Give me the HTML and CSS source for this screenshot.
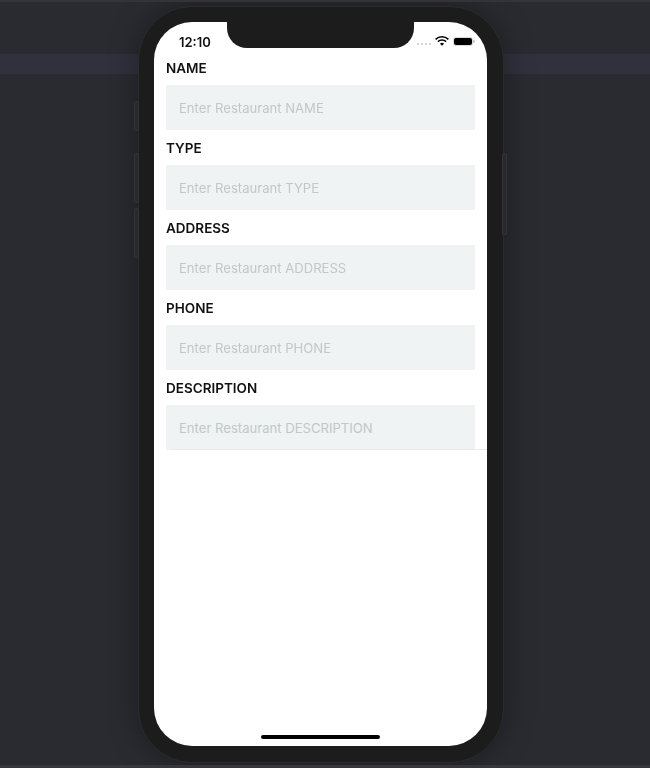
FILE: index.html
```html
<!DOCTYPE html>
<html lang="en">
<head>
  <meta charset="UTF-8" />
  <meta name="viewport" content="width=device-width, initial-scale=1.0"/>
  <title>Add Restaurant</title>
  <link rel="stylesheet" href="styles.css">
</head>
<body>
  <div class="toolbar-band"></div>
  <div class="phone">
    <span class="side-btn mute"></span>
    <span class="side-btn vol-up"></span>
    <span class="side-btn vol-down"></span>
    <span class="side-btn power"></span>
    <div class="screen">
      <div class="notch"></div>
      <div class="status-bar">
        <span class="time">12:10</span>
        <div class="status-icons">
          <div class="signal"><i></i><i></i><i></i><i></i></div>
          <svg class="wifi" viewBox="0 0 14 10" width="14" height="10">
            <path d="M0.6 3.4A9.2 9.2 0 0 1 13.4 3.4" fill="none" stroke="#000" stroke-width="1.6"/>
            <path d="M2.9 5.6A5.9 5.9 0 0 1 11.1 5.6" fill="none" stroke="#000" stroke-width="1.6"/>
            <path d="M5 7.7A2.9 2.9 0 0 1 9 7.7L7 9.8Z" fill="#000"/>
          </svg>
          <div class="battery"><div class="battery-fill"></div></div>
        </div>
      </div>
      <form class="form">
        <div class="field">
          <label class="label">NAME</label>
          <div class="input">Enter Restaurant NAME</div>
        </div>
        <div class="field">
          <label class="label">TYPE</label>
          <div class="input">Enter Restaurant TYPE</div>
        </div>
        <div class="field">
          <label class="label">ADDRESS</label>
          <div class="input">Enter Restaurant ADDRESS</div>
        </div>
        <div class="field">
          <label class="label">PHONE</label>
          <div class="input">Enter Restaurant PHONE</div>
        </div>
        <div class="field">
          <label class="label">DESCRIPTION</label>
          <div class="input last">Enter Restaurant DESCRIPTION</div>
        </div>
      </form>
      <div class="home-bar"></div>
    </div>
  </div>
</body>
</html>
```

FILE: styles.css
```css
* {
  margin: 0;
  padding: 0;
  box-sizing: border-box;
}
html, body {
  height: 768px;
  overflow: hidden;
}
body {
  background: #2a2b31;
  border-top: 2px solid #333438;
  border-bottom: 3px solid #36373b;
  position: relative;
  display: flex;
  justify-content: center;
  font-family: Inter, "Noto Sans", sans-serif;
}
.toolbar-band {
  position: absolute;
  left: 0;
  right: 0;
  top: 52px;
  height: 20px;
  background: #30313c;
}
.phone {
  position: relative;
  width: 366px;
  height: 757px;
  margin-top: 4px;
  margin-right: 8px;
  padding: 15px 16px;
  background: #1c1c1d;
  border: 1px solid #2c2c2e;
  border-radius: 54px;
  box-shadow: 0 0 30px rgba(0, 0, 0, 0.35);
  filter: blur(0.35px);
}
.side-btn {
  position: absolute;
  width: 5px;
  background: #29292b;
  border: 1px solid #333335;
  border-radius: 2px;
}
.mute {
  left: -5px;
  top: 94px;
  height: 30px;
}
.vol-up {
  left: -5px;
  top: 146px;
  height: 50px;
}
.vol-down {
  left: -5px;
  top: 201px;
  height: 50px;
}
.power {
  right: -4px;
  top: 146px;
  height: 82px;
}
.screen {
  position: relative;
  width: 333px;
  height: 724px;
  margin-left: -1px;
  background: #fff;
  border-radius: 38px;
  overflow: hidden;
}
.notch {
  position: absolute;
  left: 73px;
  top: 0;
  width: 187px;
  height: 26px;
  background: #1c1c1d;
  border-radius: 0 0 20px 20px;
}
.status-bar {
  height: 38px;
  display: flex;
  justify-content: space-between;
  align-items: center;
  padding: 1px 13px 0 25px;
}
.time {
  font-size: 13px;
  font-weight: 600;
  color: #111;
}
.status-icons {
  display: flex;
  align-items: center;
  gap: 4px;
}
.signal {
  display: flex;
  gap: 1.5px;
  margin-top: 5px;
}
.signal i {
  width: 2.5px;
  height: 2px;
  background: #c4c4c6;
  border-radius: 1px;
}
.wifi {
  margin-top: -1px;
}
.battery {
  position: relative;
  width: 20px;
  height: 9px;
  margin-right: 1px;
  padding: 1px;
  background: #dcdcde;
  border-radius: 3px;
}
.battery::after {
  content: "";
  position: absolute;
  right: -2px;
  top: 3px;
  width: 2px;
  height: 3px;
  background: #c8c8ca;
  border-radius: 0 1px 1px 0;
}
.battery-fill {
  height: 100%;
  width: 18px;
  background: #000;
  border-radius: 2px;
}
.form {
  padding-left: 12px;
}
.field {
  display: flex;
  flex-direction: column;
}
.label {
  height: 35px;
  display: flex;
  align-items: center;
  font-size: 13.5px;
  font-weight: 600;
  color: #111;
}
.field:first-child .label {
  height: 25px;
  padding-bottom: 9px;
}
.input {
  width: 309px;
  height: 45px;
  display: flex;
  align-items: center;
  padding-left: 13px;
  background: #eff3f3;
  color: #c3c7c9;
  font-size: 13.1px;
}
.last {
  position: relative;
}
.last::after {
  content: "";
  position: absolute;
  left: 4px;
  right: -12px;
  bottom: 0;
  height: 1px;
  background: #e8eaec;
}
.home-bar {
  position: absolute;
  left: 107px;
  bottom: 7px;
  width: 119px;
  height: 4px;
  background: #000;
  border-radius: 2px;
}
```
